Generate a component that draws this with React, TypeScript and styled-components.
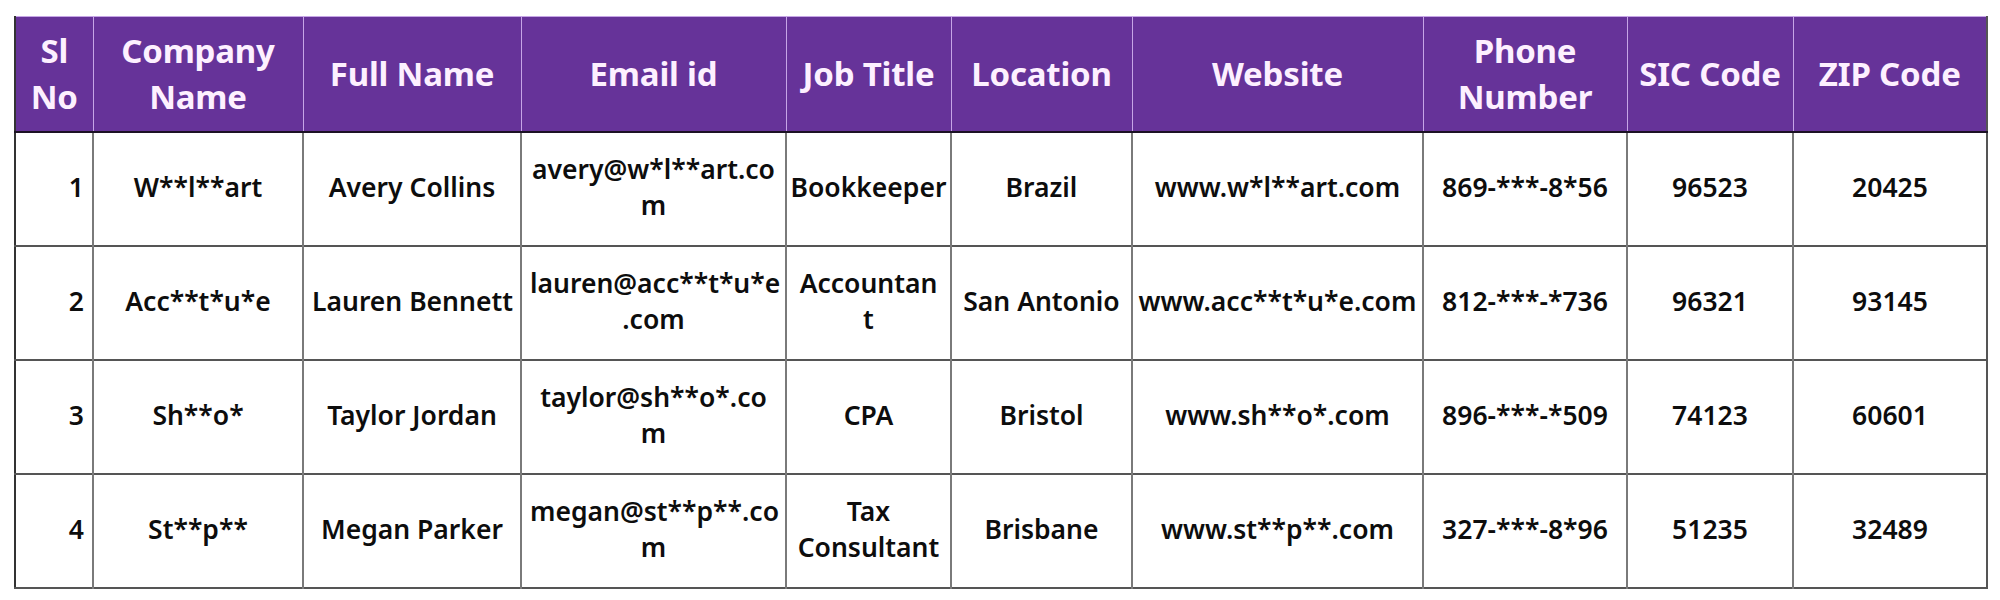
import React from "react";
import styled, { createGlobalStyle } from "styled-components";

type Row = {
  id: number;
  company: string;
  name: string;
  email: string;
  title: string;
  location: string;
  website: string;
  phone: string;
  sic: string;
  zip: string;
};

const columns: { label: string; width: number }[] = [
  { label: "Sl\nNo", width: 78 },
  { label: "Company\nName", width: 210 },
  { label: "Full Name", width: 218 },
  { label: "Email id", width: 265 },
  { label: "Job Title", width: 165 },
  { label: "Location", width: 181 },
  { label: "Website", width: 291 },
  { label: "Phone\nNumber", width: 204 },
  { label: "SIC Code", width: 166 },
  { label: "ZIP Code", width: 194 },
];

const rows: Row[] = [
  {
    id: 1,
    company: "W**l**art",
    name: "Avery Collins",
    email: "avery@w*l**art.co\nm",
    title: "Bookkeeper",
    location: "Brazil",
    website: "www.w*l**art.com",
    phone: "869-***-8*56",
    sic: "96523",
    zip: "20425",
  },
  {
    id: 2,
    company: "Acc**t*u*e",
    name: "Lauren Bennett",
    email: "lauren@acc**t*u*e\n.com",
    title: "Accountan\nt",
    location: "San Antonio",
    website: "www.acc**t*u*e.com",
    phone: "812-***-*736",
    sic: "96321",
    zip: "93145",
  },
  {
    id: 3,
    company: "Sh**o*",
    name: "Taylor Jordan",
    email: "taylor@sh**o*.co\nm",
    title: "CPA",
    location: "Bristol",
    website: "www.sh**o*.com",
    phone: "896-***-*509",
    sic: "74123",
    zip: "60601",
  },
  {
    id: 4,
    company: "St**p**",
    name: "Megan Parker",
    email: "megan@st**p**.co\nm",
    title: "Tax\nConsultant",
    location: "Brisbane",
    website: "www.st**p**.com",
    phone: "327-***-8*96",
    sic: "51235",
    zip: "32489",
  },
];

const App = () => {
  return (
    <Page>
      <GlobalStyle />
      <Table>
        <colgroup>
          {columns.map((col) => (
            <col key={col.label} style={{ width: col.width }} />
          ))}
        </colgroup>
        <thead>
          <tr>
            {columns.map((col) => (
              <HeadCell key={col.label}>{col.label}</HeadCell>
            ))}
          </tr>
        </thead>
        <tbody>
          {rows.map((row) => (
            <BodyRow key={row.id}>
              <Cell $align="right">{row.id}</Cell>
              <Cell>{row.company}</Cell>
              <Cell>{row.name}</Cell>
              <Cell>{row.email}</Cell>
              <Cell $tight>{row.title}</Cell>
              <Cell $tight>{row.location}</Cell>
              <Cell $tight>{row.website}</Cell>
              <Cell>{row.phone}</Cell>
              <Cell>{row.sic}</Cell>
              <Cell>{row.zip}</Cell>
            </BodyRow>
          ))}
        </tbody>
      </Table>
    </Page>
  );
};

export default App;

const GlobalStyle = createGlobalStyle`
  body {
    margin: 0;
    background: #ffffff;
    font-family: "Noto Sans", "Open Sans", sans-serif;
  }
`;

const Page = styled.div`
  padding: 16px 14px;
`;

const Table = styled.table`
  width: 1972px;
  table-layout: fixed;
  border-collapse: collapse;
  border-left: 2px solid #333;
  border-right: 2px solid #555;
  border-bottom: 2px solid #777;
`;

const HeadCell = styled.th`
  height: 114px;
  padding: 0 2px;
  background: #663399;
  color: #fdf0ff;
  font-size: 33px;
  font-weight: 700;
  line-height: 46px;
  letter-spacing: -0.2px;
  text-align: center;
  vertical-align: middle;
  white-space: pre;
  border-top: 1px solid #c6a6e6;
  border-left: 1px solid #c6a6e6;
  border-bottom: 2px solid #1c1224;

  &:first-child {
    border-left: none;
  }
`;

const BodyRow = styled.tr`
  height: 114px;
  border-bottom: 2px solid #555;
`;

const Cell = styled.td<{ $align?: "center" | "right"; $tight?: boolean }>`
  padding: 0 ${(props) => (props.$tight ? "2px" : "8px")};
  padding-bottom: 4px;
  color: #0d0d0d;
  font-size: 26.5px;
  font-weight: 600;
  line-height: 36px;
  text-align: ${(props) => props.$align || "center"};
  vertical-align: middle;
  white-space: pre;
  border-left: 2px solid #7a7a7a;

  &:first-child {
    border-left: none;
  }
`;
